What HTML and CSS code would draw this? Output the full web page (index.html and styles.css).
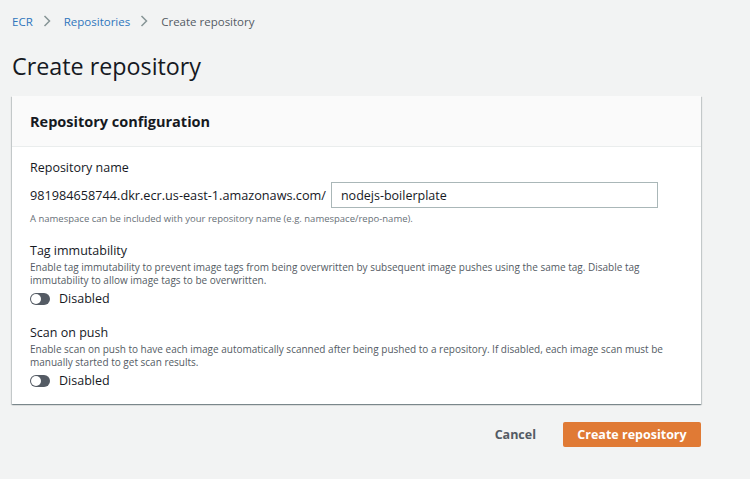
FILE: index.html
```html
<!doctype html>
<html lang="en">
<head>
	<meta charset="UTF-8" />
	<title>Create repository</title>
<link rel="stylesheet" href="styles.css">
</head>
<body>
	<div class="page">
		<nav class="crumbs">
			<a href="javascript:;">ECR</a>
			<span class="sep">
				<svg width="8" height="12" viewBox="0 0 8 12"><path d="M1.5 1l5 5-5 5" fill="none" stroke="#879596" stroke-width="1.5"/></svg>
			</span>
			<a href="javascript:;">Repositories</a>
			<span class="sep">
				<svg width="8" height="12" viewBox="0 0 8 12"><path d="M1.5 1l5 5-5 5" fill="none" stroke="#879596" stroke-width="1.5"/></svg>
			</span>
			<span class="cur">Create repository</span>
		</nav>

		<h1 class="title">Create repository</h1>

		<section class="panel">
			<div class="panel-head">
				<h2>Repository configuration</h2>
			</div>
			<div class="panel-body">
				<div class="field">
					<label class="label">Repository name</label>
					<div class="name-row">
						<span class="prefix">981984658744.dkr.ecr.us-east-1.amazonaws.com/</span>
						<input class="input" type="text" value="nodejs-boilerplate" />
					</div>
					<p class="hint">A namespace can be included with your repository name (e.g. namespace/repo-name).</p>
				</div>

				<div class="field">
					<label class="label">Tag immutability</label>
					<p class="desc">Enable tag immutability to prevent image tags from being overwritten by subsequent image pushes using the same tag. Disable tag immutability to allow image tags to be overwritten.</p>
					<div class="toggle-row">
						<span class="toggle"></span>
						<span>Disabled</span>
					</div>
				</div>

				<div class="field">
					<label class="label">Scan on push</label>
					<p class="desc">Enable scan on push to have each image automatically scanned after being pushed to a repository. If disabled, each image scan must be manually started to get scan results.</p>
					<div class="toggle-row">
						<span class="toggle"></span>
						<span>Disabled</span>
					</div>
				</div>
			</div>
		</section>

		<div class="actions">
			<a href="javascript:;" class="cancel">Cancel</a>
			<a href="javascript:;" class="btn">Create repository</a>
		</div>
	</div>
</body>
</html>
```

FILE: styles.css
```css
body,h1,h2,p{
	margin: 0;
	padding: 0;
}
body{
	background: #f2f3f3;
	font-family: "Open Sans", "Liberation Sans", sans-serif;
	color: #16191f;
}
.page{
	padding: 12px 49px 0 12px;
}
.crumbs{
	display: flex;
	align-items: center;
	height: 18px;
	font-size: 11.5px;
}
.crumbs a{
	color: #2f76bd;
	text-decoration: none;
}
.crumbs .sep{
	display: flex;
	margin: 0 13px 0 10px;
}
.crumbs .cur{
	color: #545b64;
}
.title{
	margin-top: 20px;
	font-size: 23.3px;
	font-weight: normal;
	line-height: 32px;
}
.panel{
	margin-top: 14px;
	background: #fff;
	box-shadow: 0 1px 1px 0 rgba(0,28,36,.3), 1px 1px 1px 0 rgba(0,28,36,.15), -1px 1px 1px 0 rgba(0,28,36,.15);
}
.panel-head{
	height: 50px;
	display: flex;
	align-items: center;
	padding: 0 18px;
	background: #fafafa;
	border-bottom: 1px solid #eaeded;
}
.panel-head h2{
	font-size: 14.5px;
	font-weight: bold;
}
.panel-body{
	padding: 11px 18px 14px;
}
.field{
	margin-bottom: 15px;
}
.field:last-child{
	margin-bottom: 0;
}
.label{
	display: block;
	font-size: 12.5px;
	line-height: 20px;
}
.name-row{
	display: flex;
	align-items: center;
	margin-top: 4px;
}
.prefix{
	font-size: 12.7px;
	margin-right: 5px;
}
.input{
	width: 327px;
	height: 26px;
	box-sizing: border-box;
	border: 1px solid #aab7b8;
	padding: 0 9px;
	font-family: inherit;
	font-size: 12.5px;
	color: #16191f;
}
.hint{
	font-size: 9.5px;
	color: #687078;
	line-height: 14px;
	margin-top: 4px;
}
.desc{
	font-size: 10px;
	color: #545b64;
	line-height: 13px;
}
.toggle-row{
	display: flex;
	align-items: center;
	margin-top: 3px;
	font-size: 12.5px;
	line-height: 18px;
}
.toggle{
	width: 20px;
	height: 12px;
	border-radius: 6px;
	background: #545b64;
	margin-right: 9px;
	position: relative;
}
.toggle::after{
	content: "";
	position: absolute;
	left: 1px;
	top: 1px;
	width: 10px;
	height: 10px;
	border-radius: 50%;
	background: #fff;
}
.actions{
	display: flex;
	justify-content: flex-end;
	align-items: center;
	margin-top: 18px;
}
.cancel{
	font-size: 12.5px;
	font-weight: bold;
	color: #545b64;
	text-decoration: none;
	margin-right: 27px;
}
.btn{
	display: block;
	width: 138px;
	height: 25px;
	line-height: 25px;
	text-align: center;
	background: #e07a35;
	border-radius: 2px;
	color: #fff;
	font-size: 12.5px;
	font-weight: bold;
	text-decoration: none;
}
```
